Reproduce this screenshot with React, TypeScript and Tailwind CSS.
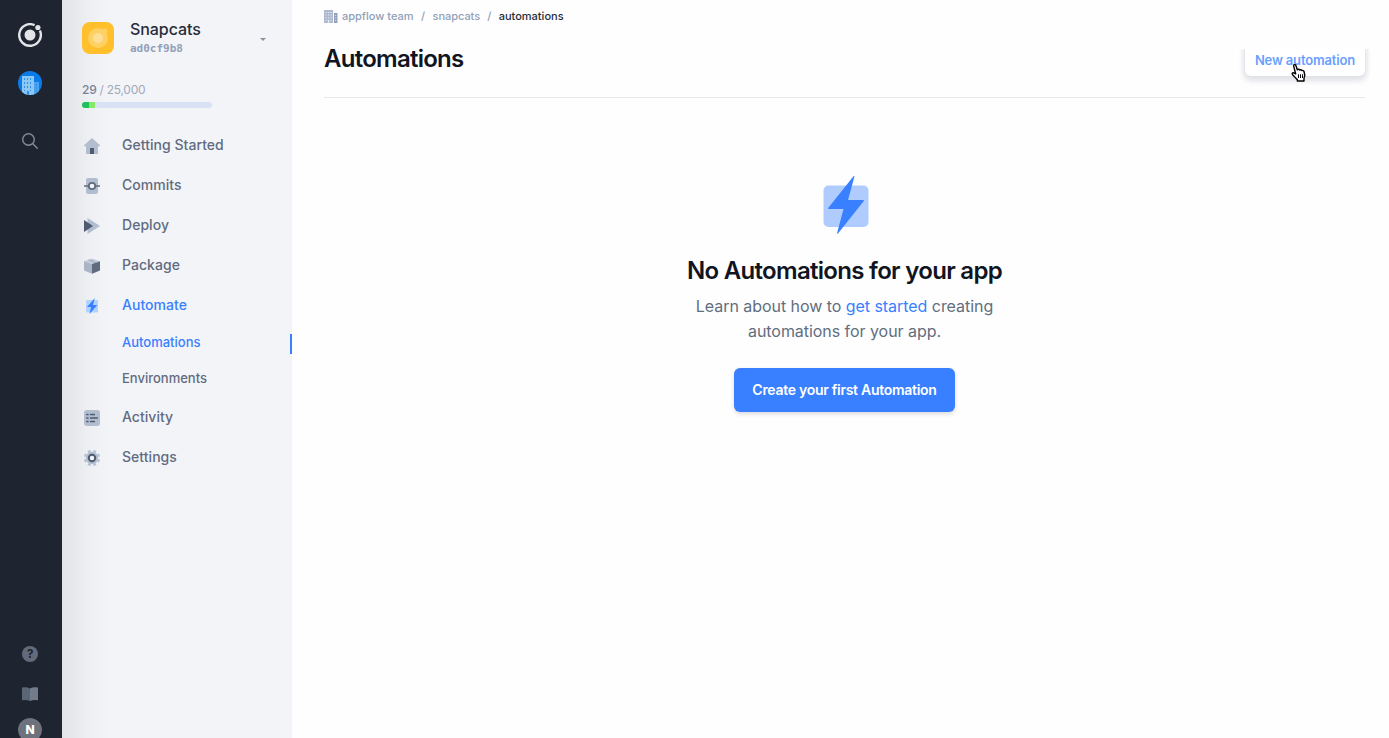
import type { ReactNode } from "react";

function IonicMark() {
  return (
    <svg width="24" height="24" viewBox="0 0 24 24" fill="none">
      <path d="M16.600 2.200A10.800 10.800 0 1 0 21.900 7.600" stroke="#e2e4e8" strokeWidth="2.400" />
      <circle cx="12" cy="12" r="5.500" fill="#e2e4e8" />
      <circle cx="19.900" cy="4.500" r="2.600" fill="#e2e4e8" />
    </svg>
  );
}

function OrgBadge() {
  return (
    <svg width="24" height="24" viewBox="0 0 24 24">
      <defs>
        <clipPath id="org">
          <circle cx="12" cy="12" r="12" />
        </clipPath>
      </defs>
      <circle cx="12" cy="12" r="12" fill="#0b7bea" />
      <g clipPath="url(#org)">
        <path d="M16 11h5v13h-5z" fill="#4aa3ee" />
        <path d="M4 5h12v19H4z" fill="#8cc8f5" />
        <path
          d="M6 7h1v2H6zM9 7h1v2H9zM12 7h1v2h-1zM6 11h1v2H6zM9 11h1v2H9zM12 11h1v2h-1zM6 15h1v2H6zM9 15h1v2H9zM12 15h1v2h-1zM6 19h1v1H6zM12 19h1v1h-1zM9 20h2v4H9zM17.800 13h1.200v1.500h-1.200zM17.800 16h1.200v1.500h-1.200zM17.800 19h1.200v1.500h-1.200z"
          fill="#2f8fe6"
        />
      </g>
    </svg>
  );
}

function SearchIcon() {
  return (
    <svg width="16" height="16" viewBox="0 0 16 16" fill="none" stroke="#858b97" strokeWidth="1.400" strokeLinecap="round">
      <circle cx="6.500" cy="6.500" r="5.800" />
      <path d="M10.800 10.800 15.300 15.300" />
    </svg>
  );
}

function HomeIcon() {
  return (
    <svg width="16" height="16" viewBox="0 0 16 16">
      <path d="M8 0 16 7.200v1h-2V16H2V8.200H0v-1z" fill="#b2bdcf" />
      <path d="M6 10h4v6H6z" fill="#505a70" />
    </svg>
  );
}

function CommitIcon() {
  return (
    <svg width="16" height="16" viewBox="0 0 16 16" fill="none">
      <rect x="2" width="12" height="16" rx="2" fill="#b2bdcf" />
      <path d="M0 8h5M11 8h5" stroke="#616b80" strokeWidth="1.600" />
      <circle cx="8" cy="8" r="3.200" fill="#f3f5fa" stroke="#616b80" strokeWidth="1.800" />
    </svg>
  );
}

function DeployIcon() {
  return (
    <svg width="16" height="16" viewBox="0 0 16 16">
      <path d="M3.500 0 16 8 3.500 16z" fill="#b2bdcf" />
      <path d="M0 2 9 8 0 14z" fill="#505a70" />
    </svg>
  );
}

function PackageIcon() {
  return (
    <svg width="16" height="16" viewBox="0 0 16 16">
      <path d="M8 .600 16 3.300 8 6 0 3.300z" fill="#c3ccda" />
      <path d="M0 3.300 8 6v9.700L0 12.600z" fill="#aab4c6" />
      <path d="M16 3.300 8 6v9.700l8-3.100z" fill="#616b80" />
      <path d="m4 2 7.200 2.900 1.200-.400L5.200 1.600z" fill="#9aa5b9" />
    </svg>
  );
}

function AutomateIcon() {
  return (
    <svg width="16" height="16" viewBox="0 0 16 16">
      <rect x="2" y="2" width="12" height="12.500" rx="1.300" fill="#b0d4ff" />
      <path d="M10.800 0 3 9h4L5.500 16 13.300 7H9z" fill="#3880ff" />
    </svg>
  );
}

function ActivityIcon() {
  return (
    <svg width="16" height="16" viewBox="0 0 16 16" fill="none">
      <rect width="16" height="16" rx="3" fill="#b2bdcf" />
      <path
        d="M2.900 4.500h1M2.900 8h1M2.900 11.500h1M6.700 4.500h3.600M6.700 8h6.500M6.700 11.500h3.600"
        stroke="#505a70"
        strokeWidth="1.700"
        strokeLinecap="round"
      />
    </svg>
  );
}

function SettingsIcon() {
  return (
    <svg width="16" height="16" viewBox="0 0 16 16" fill="none">
      <circle cx="8" cy="8" r="6.200" fill="#b2bdcf" />
      <circle cx="8" cy="8" r="7.100" stroke="#b2bdcf" strokeWidth="2.200" pathLength="80" strokeDasharray="5 5" transform="rotate(11.250 8 8)" />
      <circle cx="8" cy="8" r="3.200" fill="#f3f5fa" stroke="#505a70" strokeWidth="2" />
    </svg>
  );
}

function Building() {
  return (
    <svg width="14" height="13" viewBox="0 0 14 13">
      <path d="M0 0h9v13H0z" fill="#adb9cf" />
      <path d="M10 3h3.500v10H10z" fill="#92a0b9" />
      <path
        d="M1.500 2h1.200v1H1.500zM4 2h1.200v1H4zM6.400 2h1.200v1H6.400zM1.500 4.600h1.200v1H1.500zM4 4.600h1.200v1H4zM6.400 4.600h1.200v1H6.400zM1.500 7.200h1.200v1H1.500zM4 7.200h1.200v1H4zM6.400 7.200h1.200v1H6.400zM1.500 9.800h1.200v1H1.500zM3.900 9.800h1.300V13H3.900zM6.400 9.800h1.200v1H6.400zM11.200 5h1v1h-1zM11.200 7.500h1v1h-1zM11.200 10h1v1h-1z"
        fill="#e6eaf2"
      />
    </svg>
  );
}

function Rail() {
  return (
    <aside className="flex w-[62px] shrink-0 flex-col items-center bg-[#1f2530] pt-[23px] pr-[2px]">
      <IonicMark />
      <div className="mt-6">
        <OrgBadge />
      </div>
      <div className="mt-[38px]">
        <SearchIcon />
      </div>
      <div className="mt-auto flex size-4 items-center justify-center rounded-full bg-[#636b7b] text-[12px] font-bold text-[#1f2530]">?</div>
      <svg className="mt-[25px]" width="16" height="14" viewBox="0 0 16 14">
        <path d="M0 .500q5-.800 8 1V14q-3-1.600-8-.800z" fill="#5a6676" />
        <path d="M16 .500q-5-.800-8 1V14q3-1.600 8-.800z" fill="#737c8b" />
      </svg>
      <div className="mt-[17px] -mb-[4px] flex size-6 shrink-0 items-center justify-center rounded-full bg-[#6d727c] text-[12px] font-extrabold text-white">N</div>
    </aside>
  );
}

function NavItem({ icon, label, active }: { icon: ReactNode; label: string; active?: boolean }) {
  return (
    <a className={`flex h-10 items-center text-[14px] font-medium tracking-[0.003em] ${active ? "text-[#3880ff]" : "text-[#616b80]"}`}>
      <span className="mt-[2px] mr-[22px] ml-[2px]">{icon}</span>
      <span className="-mt-[2px]">{label}</span>
    </a>
  );
}

function Sidebar() {
  return (
    <aside className="flex w-[230px] shrink-0 flex-col bg-[#f3f4f8] bg-[linear-gradient(to_right,#e3e4e8_0px,#e8e9ed_14px,#eeeff3_26px,#f1f2f6_38px,#f3f4f8_50px)] pl-5">
      <header className="mt-[22px] flex h-8">
        <svg width="32" height="32" viewBox="0 0 32 32">
          <rect width="32" height="32" rx="8" fill="#ffc02b" />
          <circle cx="16" cy="16" r="10" fill="#ffd064" />
          <circle cx="16" cy="16" r="5" fill="#ffdf98" />
          <circle cx="23" cy="9" r="2.500" fill="#ffd064" />
        </svg>
        <div className="ml-4 flex-1">
          <div className="-mt-[3px] text-[16px] leading-5 font-medium tracking-[-0.004em] text-[#272d39]">Snapcats</div>
          <div className="mt-[3px] font-['DejaVu_Sans_Mono',monospace] text-[11px] leading-[14px] font-bold text-[#92a0b9]">ad0cf9b8</div>
        </div>
        <svg className="mt-4 mr-[26px]" width="6" height="3" viewBox="0 0 6 3">
          <path d="M0 0h6L3 3z" fill="#8e929b" />
        </svg>
      </header>
      <div className="mt-7 text-[12px] leading-4 tracking-[-0.022em] text-[#a2a9b8]">
        <span className="font-medium text-[#7a8499]">29</span> / 25,000
      </div>
      <div className="mt-1 flex h-[6px] w-[130px] overflow-hidden rounded-full bg-[#d9e1f5]">
        <div className="w-[7px] bg-[#1fbf5c]" />
        <div className="w-[6px] bg-[#87ea66]" />
      </div>
      <nav className="mt-[17px]">
        <NavItem icon={<HomeIcon />} label="Getting Started" />
        <NavItem icon={<CommitIcon />} label="Commits" />
        <NavItem icon={<DeployIcon />} label="Deploy" />
        <NavItem icon={<PackageIcon />} label="Package" />
        <NavItem icon={<AutomateIcon />} label="Automate" active />
        <div className="flex h-9 items-center justify-between pl-10 text-[13px] font-medium text-[#3880ff]">
          <span>Automations</span>
          <span className="mt-[2px] h-5 w-[2px] bg-[#3880ff]" />
        </div>
        <div className="flex h-9 items-center pl-10 text-[13px] font-medium text-[#616b80]">Environments</div>
        <NavItem icon={<ActivityIcon />} label="Activity" />
        <NavItem icon={<SettingsIcon />} label="Settings" />
      </nav>
    </aside>
  );
}

function HandCursor() {
  return (
    <svg className="absolute top-[19px] left-[46px]" width="15" height="18" viewBox="0 0 15 18">
      <path
        d="M2.600 1.900C2.400.400 4.600.200 5 1.700l1.300 4.100c.6-.8 2-.6 2.300.2.700-.6 1.900-.3 2.200.5.900-.4 2 .1 2.200 1l.7 3.300c.2 1.300-.6 2.300-.7 3.500V17H6.300v-1.400c-1.600-1.400-2.900-3.100-4.500-4.700C.5 9.500 1.600 8.300 3 9l1.700 1z"
        fill="#fff"
        stroke="#000"
        strokeWidth="1.400"
        strokeLinejoin="round"
      />
      <path d="M7.500 10.300v3.700M9.500 10.300v3.700M11.500 10.300v3.700" stroke="#000" strokeWidth="1" />
    </svg>
  );
}

export default function App() {
  return (
    <div className="flex h-[738px] w-full overflow-hidden bg-[#fefefe] font-['Inter',sans-serif]">
      <Rail />
      <Sidebar />
      <main className="flex min-w-0 flex-1 flex-col pr-6 pl-8">
        <div className="mt-2 flex h-4 items-center text-[11px] font-medium text-[#92a0b9]">
          <Building />
          <span className="ml-1">appflow team</span>
          <span className="mx-[7.500px]">/</span>
          <span className="tracking-[-0.005em]">snapcats</span>
          <span className="mx-[7.300px]">/</span>
          <span className="text-[#272d39]">automations</span>
        </div>
        <div className="flex h-[74px] justify-between border-b border-[#e6e8ec]">
          <h1 className="mt-[19px] text-[24px] leading-[32px] font-semibold tracking-[-0.031em] text-[#10151f]">Automations</h1>
          <div className="-mr-3 mt-[25px] h-[48px] overflow-hidden px-3">
            <button className="relative -mt-1 flex h-[31px] w-[120px] items-center justify-center rounded-b-[6px] bg-white text-[13px] font-semibold tracking-[-0.012em] whitespace-nowrap text-[#6a9fff] shadow-[0_2px_6px_rgba(20,30,60,0.12),0_4px_4px_3px_rgba(60,65,120,0.06)]">
              New automation
              <HandCursor />
            </button>
          </div>
        </div>
        <section className="flex flex-col items-center pt-[78px] text-center">
          <svg className="ml-[2px]" width="46" height="58" viewBox="0 0 46 58">
            <rect x=".500" y="9.500" width="45" height="41.500" rx="5" fill="#b0ccff" />
            <path d="M31.500.200 25 24h15c.8 0 1.100.6.600 1.200L15 57.500c-.5.500-1.100.2-.9-.4L20.500 33H6c-.8 0-1.200-.7-.600-1.300L30.700 0z" fill="#3880ff" />
          </svg>
          <h2 className="mt-[21px] text-[24px] leading-8 font-semibold tracking-[-0.029em] text-[#10151f]">No Automations for your app</h2>
          <p className="mt-[7px] text-[16px] leading-[25px] tracking-[-0.003em] text-[#616e7e]">
            Learn about how to <a className="text-[#3880ff]">get started</a> creating
            <br />
            automations for your app.
          </p>
          <button className="mt-[24px] h-11 w-[221px] rounded-[6px] bg-[#3880ff] pb-[2px] text-[14px] font-semibold tracking-[-0.02em] text-white shadow-[0_2px_4px_rgba(2,8,20,0.14)]">
            Create your first Automation
          </button>
        </section>
      </main>
    </div>
  );
}
